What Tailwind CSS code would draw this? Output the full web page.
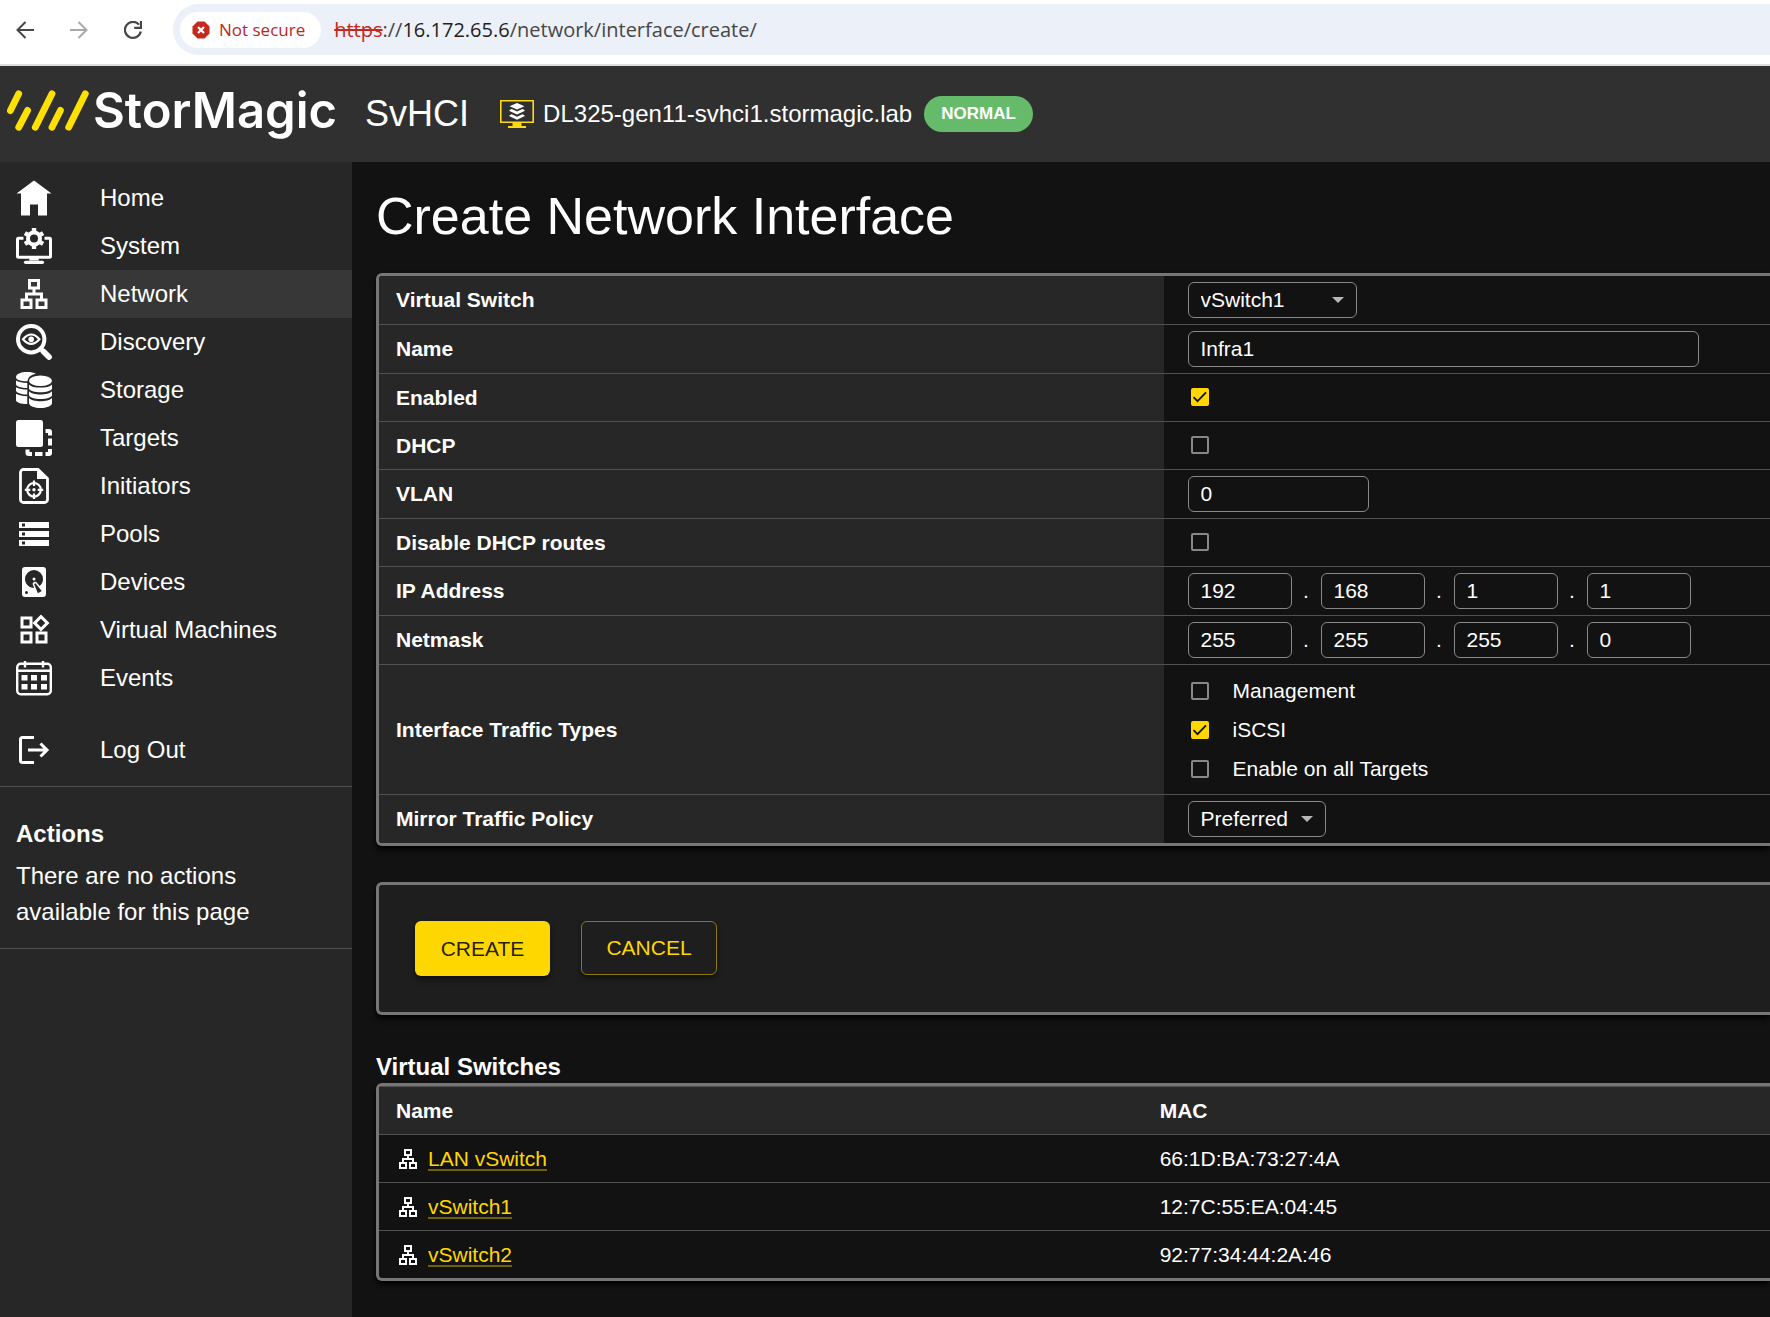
<!DOCTYPE html>
<html lang="en">
<head>
  <meta charset="UTF-8" />
  <meta name="viewport" content="width=device-width, initial-scale=1.0"/>
  <title>Create Network Interface - StorMagic SvHCI</title>
  <script src="https://cdn.jsdelivr.net/npm/@tailwindcss/browser@4"></script>
</head>
<body class="min-h-screen flex flex-col bg-[#121212] text-white font-['Liberation_Sans',Arial,sans-serif] overflow-x-hidden">

  <!-- shared icons -->
  <svg class="hidden">
    <symbol id="lan" viewBox="0 0 24 24"><path d="M13 22h8v-7h-3v-4h-5V9h3V2H8v7h3v2H6v4H3v7h8v-7H8v-2h8v2h-3v7zM10 7V4h4v3h-4zM9 17v3H5v-3h4zm10 0v3h-4v-3h4z"/></symbol>
    <symbol id="check" viewBox="0 0 18 18"><path d="M2.500 9.200l4 4 8.500-8.800" fill="none" stroke="#121212" stroke-width="1.800"/></symbol>
    <symbol id="caret" viewBox="0 0 12 6"><path d="M0 0h12L6 6z"/></symbol>
  </svg>

  <!-- Browser bar -->
  <div class="flex items-center h-[66px] bg-white border-b-2 border-[#dcdedc] pb-[5px] text-[#474747]">
    <button type="button" aria-label="Back" class="ml-4">
      <svg class="w-[18px] h-[18px]" viewBox="0 0 18 18" fill="none" stroke="currentColor" stroke-width="2"><path d="M18 9H1.500M9.500 1L1.500 9l8 8"/></svg>
    </button>
    <button type="button" aria-label="Forward" class="ml-9 text-[#a9a9a9]">
      <svg class="w-[18px] h-[18px]" viewBox="0 0 18 18" fill="none" stroke="currentColor" stroke-width="2"><path d="M0 9h16.500M8.500 1l8 8-8 8"/></svg>
    </button>
    <button type="button" aria-label="Reload" class="ml-9">
      <svg class="w-[18px] h-[18px]" viewBox="0 0 18 18" fill="none" stroke="currentColor" stroke-width="2.200"><path d="M16.800 10.500A8 8 0 1 1 15 3.600M17 0v6.800h-6.800"/></svg>
    </button>
    <div class="ml-[31px] flex-1 flex items-center h-[51px] pl-[7px] bg-[#ecf0f9] rounded-l-full font-['Open_Sans','Noto_Sans',sans-serif]">
      <div class="flex items-center gap-[9px] h-9 pl-3 pr-4 bg-white rounded-full text-[#b9271f] text-[17px]">
        <svg class="w-[18px] h-[18px]" viewBox="0 0 18 18"><path d="M5.500.5h7l5 5v7l-5 5h-7l-5-5v-7z" fill="#c5281c"/><path d="M6 6l6 6M12 6l-6 6" stroke="#fff" stroke-width="2.200"/></svg>
        <span>Not secure</span>
      </div>
      <span class="ml-[13px] text-[20px] text-[#474747]"><span class="text-[#c5281c] line-through">https</span>://<span class="text-[#1f1f1f]">16.172.65.6</span>/network/interface/create/</span>
    </div>
  </div>

  <header class="flex items-center h-24 bg-[#303030] pl-[7px]">
    <div class="flex items-center pb-2">
      <svg class="w-[82px] h-[41px] shrink-0" viewBox="0 0 82 41" stroke="#ffe100" stroke-width="6.800" stroke-linecap="round"><path d="M11.700 3.700L3.400 20.600M20.600 20.400L11.700 37.300M45 3.700L28.300 37.300M53.400 20.400L45 37.300M78.300 3.700L61.700 37.300"/></svg>
      <span class="ml-1 text-[49px] leading-none font-semibold font-['Inter',sans-serif]">StorMagic</span>
    </div>
    <span class="ml-7 text-[36px] leading-none">SvHCI</span>
    <svg class="ml-[31px] w-[34px] h-[28px]" viewBox="0 0 34 28"><path d="M.8.8h32.400v21.400H.8z" fill="none" stroke="#fdda16" stroke-width="1.600"/><path d="M12.500 22.500h9v3.500h4.500v2H8v-2h4.500z" fill="#fdda16"/><path d="M17 3l7.500 3.300L17 9.600 9.500 6.300zM9.500 10l2.200-1L17 11.600 22.300 9l2.200 1v1L17 14.500 9.500 11zM9.500 15.200l2.200-1L17 16.800l5.300-2.600 2.200 1v1L17 19.700l-7.500-3.500z" fill="#fff"/></svg>
    <span class="ml-[9px] text-2xl leading-none">DL325-gen11-svhci1.stormagic.lab</span>
    <span class="ml-3 flex items-center h-9 px-[17px] rounded-full bg-[#66bb6a] text-[17px] font-bold">NORMAL</span>
  </header>

  <div class="flex flex-1">
    <aside class="w-[352px] shrink-0 bg-[#272727] text-2xl">
      <nav class="py-3 border-b border-[#505050]">
        <a href="#" class="flex items-center gap-12 h-12 px-4">
          <svg class="w-9 h-9" viewBox="0 0 36 36" fill="currentColor"><path d="M18 .5L35.500 13.500H31V35.500h-9V24.500h-8v11H5v-22H.5z"/></svg>
          Home
        </a>
        <a href="#" class="flex items-center gap-12 h-12 px-4">
          <svg class="w-9 h-9" viewBox="0 0 36 36" fill="none" stroke="currentColor"><path d="M7.500 10.200H2.500a1 1 0 0 0-1 1v17a1 1 0 0 0 1 1h31a1 1 0 0 0 1-1v-17a1 1 0 0 0-1-1h-5" stroke-width="3"/><path d="M14 29h8l1 3.500H13z" fill="currentColor" stroke="none"/><path d="M9.500 34.300h17" stroke-width="3.200" stroke-linecap="round"/><circle cx="18" cy="10.500" r="6" stroke-width="4"/><path d="M18 0v4M18 17v4M8.900 5.200l3.500 2M23.600 13.800l3.500 2M8.900 15.800l3.500-2M23.600 7.200l3.500-2" stroke-width="4.400"/></svg>
          System
        </a>
        <a href="#" class="flex items-center gap-12 h-12 px-4 bg-[#373737]">
          <svg class="w-9 h-9 fill-current"><use href="#lan"/></svg>
          Network
        </a>
        <a href="#" class="flex items-center gap-12 h-12 px-4">
          <svg class="w-9 h-9" viewBox="0 0 36 36" fill="none" stroke="currentColor"><circle cx="15.200" cy="15.200" r="13.200" stroke-width="4"/><path d="M25 25l2 2" stroke-width="4"/><path d="M27.500 27.500l5.500 5.500" stroke-width="5.800" stroke-linecap="round"/><path d="M7 15.200Q15.200 5.800 23.400 15.200Q15.200 24.600 7 15.200z" stroke-width="2.200"/><circle cx="15.200" cy="15.200" r="2.800" fill="currentColor" stroke="none"/></svg>
          Discovery
        </a>
        <a href="#" class="flex items-center gap-12 h-12 px-4">
          <svg class="w-9 h-9" viewBox="0 0 36 36" fill="currentColor"><path d="M0 5c0-3 5-5 11-5 4 0 7 .6 9 1.800C15 3 12 5 11.500 9.300 5 9.300 0 8 0 5zM0 8.600c2.500 1.700 7 2.300 11.300 2.400v5C5 15.900 0 14.500 0 12zM0 15.200c2.500 1.700 7 2.300 11.300 2.400v5C5 22.500 0 21 0 18.600zM0 21.800c2.500 1.700 7 2.300 11.300 2.400v7.900C5 32 0 30.500 0 28z"/><ellipse cx="24.500" cy="8.700" rx="11.500" ry="5.300"/><path d="M13 12.400c2 2.200 6.500 3.200 11.500 3.200S34 14.600 36 12.400v4.300c-1 2.200-5.500 3.600-11.500 3.600s-10.500-1.400-11.500-3.600zM13 19.200c2 2.200 6.500 3.200 11.500 3.200S34 21.400 36 19.200v4.300c-1 2.200-5.500 3.600-11.500 3.600s-10.500-1.400-11.500-3.600zM13 26c2 2.200 6.500 3.200 11.500 3.200S34 28.200 36 26v5.500c-1 2.800-5.500 4.500-11.500 4.500S14 34.300 13 31.500z"/></svg>
          Storage
        </a>
        <a href="#" class="flex items-center gap-12 h-12 px-4">
          <svg class="w-9 h-9" viewBox="0 0 36 36" fill="currentColor"><rect width="27" height="27" rx="2.500"/><path d="M29.500 9H33a3 3 0 0 1 3 3v3.500h-4V13h-2.500zM32 18.500h4v7h-4zM32 29h4v4a3 3 0 0 1-3 3h-3.500v-4H32zM19 32h7.500v4H19zM9.500 29.500h4V32H16v4h-3.500a3 3 0 0 1-3-3z"/></svg>
          Targets
        </a>
        <a href="#" class="flex items-center gap-12 h-12 px-4">
          <svg class="w-9 h-9" viewBox="0 0 36 36" fill="none" stroke="currentColor"><path d="M22 1.500H7.500a3 3 0 0 0-3 3v27a3 3 0 0 0 3 3h21a3 3 0 0 0 3-3V10.500z" stroke-width="2.800"/><path d="M21 1l11 10H21z" fill="currentColor" stroke="none"/><circle cx="18" cy="21.800" r="6.800" stroke-width="2.200"/><path d="M18 12.500v5.500M18 25.500v5.500M8.800 21.800h5.500M21.700 21.800h5.500" stroke-width="2.200"/><circle cx="18" cy="21.800" r="1.700" fill="currentColor" stroke="none"/></svg>
          Initiators
        </a>
        <a href="#" class="flex items-center gap-12 h-12 px-4">
          <svg class="w-9 h-9" viewBox="0 0 24 24" fill="currentColor"><path d="M2 20h20v-4H2v4zm2-3h2v2H4v-2zM2 4v4h20V4H2zm4 3H4V5h2v2zm-4 7h20v-4H2v4zm2-3h2v2H4v-2z"/></svg>
          Pools
        </a>
        <a href="#" class="flex items-center gap-12 h-12 px-4">
          <svg class="w-9 h-9" viewBox="0 0 24 24" fill="currentColor"><path d="M6 2h12a2 2 0 0 1 2 2v16a2 2 0 0 1-2 2H6a2 2 0 0 1-2-2V4a2 2 0 0 1 2-2m6 2a6 6 0 0 0-6 6c0 3.310 2.690 6 6.100 6l-.88-2.230c-.27-.48-.11-1.090.37-1.370l.86-.5c.48-.27 1.090-.11 1.370.37l1.920 2.420A5.980 5.980 0 0 0 18 10a6 6 0 0 0-6-6m0 5a1 1 0 0 1 1 1 1 1 0 0 1-1 1 1 1 0 0 1-1-1 1 1 0 0 1 1-1m-5 9a1 1 0 0 0-1 1 1 1 0 0 0 1 1 1 1 0 0 0 1-1 1 1 0 0 0-1-1m5.090-4.730l2.490 6.310 2.590-1.500-4.220-5.310-.86.5z"/></svg>
          Devices
        </a>
        <a href="#" class="flex items-center gap-12 h-12 px-4">
          <svg class="w-9 h-9" viewBox="0 0 24 24" fill="currentColor"><path d="M16.660 4.520l2.830 2.830-2.830 2.830-2.830-2.830 2.830-2.830M9 5v4H5V5h4m10 10v4h-4v-4h4M9 15v4H5v-4h4m7.660-13.310L11 7.340 16.660 13l5.660-5.660-5.660-5.650zM11 3H3v8h8V3zm10 10h-8v8h8v-8zm-10 0H3v8h8v-8z"/></svg>
          Virtual Machines
        </a>
        <a href="#" class="flex items-center gap-12 h-12 px-4">
          <svg class="w-9 h-9" viewBox="0 0 36 36" fill="none" stroke="currentColor" stroke-width="2.400"><rect x="1.200" y="3.700" width="33.600" height="30.600" rx="3.500"/><path d="M1 10.800h34M9 1v6.500M27 1v6.500"/><path d="M5.500 15h6v5.500h-6zM15 15h6v5.500h-6zM25 15h6v5.500h-6zM5.500 24h6v5.500h-6zM15 24h6v5.500h-6zM25 24h6v5.500h-6z" fill="currentColor" stroke="none"/></svg>
          Events
        </a>
        <a href="#" class="mt-6 flex items-center gap-12 h-12 px-4">
          <svg class="w-9 h-9" viewBox="0 0 36 36" fill="none" stroke="currentColor" stroke-width="3"><path d="M18 5.500H6.500a2 2 0 0 0-2 2v21a2 2 0 0 0 2 2H18M12 18h19M24.500 11.500l6.500 6.500-6.500 6.500"/></svg>
          Log Out
        </a>
      </nav>
      <section class="px-4 pt-[29px] pb-[18px] border-b border-[#505050]">
        <h2 class="font-bold leading-9">Actions</h2>
        <p class="mt-[6px] leading-9">There are no actions<br>available for this page</p>
      </section>
    </aside>

    <main class="flex-1 min-w-0 pl-6 text-[21px] leading-6">
      <h1 class="mt-6 text-[52px] leading-[60px]">Create Network Interface</h1>

      <form>
        <div class="mt-[27px] border-3 border-r-0 border-[#767676] rounded-l-md overflow-hidden shadow-md shadow-black">
          <table class="w-full border-separate border-spacing-0">
            <tbody>
              <tr>
                <th scope="row" class="w-[56.4%] h-[49px] px-[17px] text-left bg-[#272727] border-b border-[#515151]"><label for="vswitch">Virtual Switch</label></th>
                <td class="px-6 border-b border-[#515151]">
                  <div class="relative w-[169px]">
                    <select id="vswitch" class="block w-full h-9 px-3 appearance-none border border-[#888] rounded-md bg-[#121212]">
                      <option>vSwitch1</option>
                      <option>vSwitch2</option>
                      <option>LAN vSwitch</option>
                    </select>
                    <svg class="absolute right-[13px] top-[15px] w-3 h-[6px] fill-[#b8b8b8] pointer-events-none"><use href="#caret"/></svg>
                  </div>
                </td>
              </tr>
              <tr>
                <th scope="row" class="h-[49px] px-[17px] text-left bg-[#272727] border-b border-[#515151]"><label for="name">Name</label></th>
                <td class="px-6 border-b border-[#515151]"><input id="name" type="text" value="Infra1" class="block w-[511px] h-9 px-3 border border-[#888] rounded-md"></td>
              </tr>
              <tr>
                <th scope="row" class="h-12 px-[17px] text-left bg-[#272727] border-b border-[#515151]"><label for="enabled">Enabled</label></th>
                <td class="px-[27px] pb-0.5 border-b border-[#515151]">
                  <div class="relative w-[18px] h-[18px]">
                    <input id="enabled" type="checkbox" checked class="peer block w-[18px] h-[18px] appearance-none rounded-xs border-2 border-[#888] checked:border-[#ffd700] checked:bg-[#ffd700]">
                    <svg class="absolute inset-0 w-[18px] h-[18px] hidden peer-checked:block pointer-events-none"><use href="#check"/></svg>
                  </div>
                </td>
              </tr>
              <tr>
                <th scope="row" class="h-12 px-[17px] text-left bg-[#272727] border-b border-[#515151]"><label for="dhcp">DHCP</label></th>
                <td class="px-[27px] pb-0.5 border-b border-[#515151]">
                  <div class="relative w-[18px] h-[18px]">
                    <input id="dhcp" type="checkbox" class="peer block w-[18px] h-[18px] appearance-none rounded-xs border-2 border-[#888] checked:border-[#ffd700] checked:bg-[#ffd700]">
                    <svg class="absolute inset-0 w-[18px] h-[18px] hidden peer-checked:block pointer-events-none"><use href="#check"/></svg>
                  </div>
                </td>
              </tr>
              <tr>
                <th scope="row" class="h-[49px] px-[17px] text-left bg-[#272727] border-b border-[#515151]"><label for="vlan">VLAN</label></th>
                <td class="px-6 border-b border-[#515151]"><input id="vlan" type="text" value="0" class="block w-[181px] h-9 px-3 border border-[#888] rounded-md"></td>
              </tr>
              <tr>
                <th scope="row" class="h-12 px-[17px] text-left bg-[#272727] border-b border-[#515151]"><label for="noroutes">Disable DHCP routes</label></th>
                <td class="px-[27px] pb-0.5 border-b border-[#515151]">
                  <div class="relative w-[18px] h-[18px]">
                    <input id="noroutes" type="checkbox" class="peer block w-[18px] h-[18px] appearance-none rounded-xs border-2 border-[#888] checked:border-[#ffd700] checked:bg-[#ffd700]">
                    <svg class="absolute inset-0 w-[18px] h-[18px] hidden peer-checked:block pointer-events-none"><use href="#check"/></svg>
                  </div>
                </td>
              </tr>
              <tr>
                <th scope="row" class="h-[49px] px-[17px] text-left bg-[#272727] border-b border-[#515151]"><label for="ip1">IP Address</label></th>
                <td class="px-6 border-b border-[#515151]">
                  <div class="flex items-center">
                    <input id="ip1" type="text" value="192" class="w-[104px] h-9 px-3 border border-[#888] rounded-md">
                    <span class="w-[29px] text-center">.</span>
                    <input type="text" aria-label="IP address part 2" value="168" class="w-[104px] h-9 px-3 border border-[#888] rounded-md">
                    <span class="w-[29px] text-center">.</span>
                    <input type="text" aria-label="IP address part 3" value="1" class="w-[104px] h-9 px-3 border border-[#888] rounded-md">
                    <span class="w-[29px] text-center">.</span>
                    <input type="text" aria-label="IP address part 4" value="1" class="w-[104px] h-9 px-3 border border-[#888] rounded-md">
                  </div>
                </td>
              </tr>
              <tr>
                <th scope="row" class="h-[49px] px-[17px] text-left bg-[#272727] border-b border-[#515151]"><label for="mask1">Netmask</label></th>
                <td class="px-6 border-b border-[#515151]">
                  <div class="flex items-center">
                    <input id="mask1" type="text" value="255" class="w-[104px] h-9 px-3 border border-[#888] rounded-md">
                    <span class="w-[29px] text-center">.</span>
                    <input type="text" aria-label="Netmask part 2" value="255" class="w-[104px] h-9 px-3 border border-[#888] rounded-md">
                    <span class="w-[29px] text-center">.</span>
                    <input type="text" aria-label="Netmask part 3" value="255" class="w-[104px] h-9 px-3 border border-[#888] rounded-md">
                    <span class="w-[29px] text-center">.</span>
                    <input type="text" aria-label="Netmask part 4" value="0" class="w-[104px] h-9 px-3 border border-[#888] rounded-md">
                  </div>
                </td>
              </tr>
              <tr>
                <th scope="row" class="h-[130px] px-[17px] text-left bg-[#272727] border-b border-[#515151]">Interface Traffic Types</th>
                <td class="px-[27px] border-b border-[#515151]">
                  <label class="flex items-center gap-6 h-[39px]">
                    <span class="relative w-[18px] h-[18px]">
                      <input type="checkbox" class="peer block w-[18px] h-[18px] appearance-none rounded-xs border-2 border-[#888] checked:border-[#ffd700] checked:bg-[#ffd700]">
                      <svg class="absolute inset-0 w-[18px] h-[18px] hidden peer-checked:block pointer-events-none"><use href="#check"/></svg>
                    </span>
                    Management
                  </label>
                  <label class="flex items-center gap-6 h-[39px]">
                    <span class="relative w-[18px] h-[18px]">
                      <input type="checkbox" checked class="peer block w-[18px] h-[18px] appearance-none rounded-xs border-2 border-[#888] checked:border-[#ffd700] checked:bg-[#ffd700]">
                      <svg class="absolute inset-0 w-[18px] h-[18px] hidden peer-checked:block pointer-events-none"><use href="#check"/></svg>
                    </span>
                    iSCSI
                  </label>
                  <label class="flex items-center gap-6 h-[39px]">
                    <span class="relative w-[18px] h-[18px]">
                      <input type="checkbox" class="peer block w-[18px] h-[18px] appearance-none rounded-xs border-2 border-[#888] checked:border-[#ffd700] checked:bg-[#ffd700]">
                      <svg class="absolute inset-0 w-[18px] h-[18px] hidden peer-checked:block pointer-events-none"><use href="#check"/></svg>
                    </span>
                    Enable on all Targets
                  </label>
                </td>
              </tr>
              <tr>
                <th scope="row" class="h-12 px-[17px] text-left bg-[#272727]"><label for="mirror">Mirror Traffic Policy</label></th>
                <td class="px-6">
                  <div class="relative w-[138px]">
                    <select id="mirror" class="block w-full h-9 px-3 appearance-none border border-[#888] rounded-md bg-[#121212]">
                      <option>Preferred</option>
                    </select>
                    <svg class="absolute right-[13px] top-[15px] w-3 h-[6px] fill-[#b8b8b8] pointer-events-none"><use href="#caret"/></svg>
                  </div>
                </td>
              </tr>
            </tbody>
          </table>
        </div>

        <div class="mt-9 p-9 flex items-start gap-[31px] bg-[#1e1e1e] border-3 border-r-0 border-[#767676] rounded-l-md shadow-md shadow-black">
          <button type="submit" class="h-[55px] px-6 min-w-[135px] rounded-md bg-[#ffd700] text-black/87 shadow-md shadow-black/50">CREATE</button>
          <button type="button" class="h-[54px] px-6 min-w-[136px] rounded-md border border-[#8e790f] text-[#ffd700] shadow-md shadow-black/40">CANCEL</button>
        </div>
      </form>

      <h2 class="mt-9 text-2xl leading-8 font-bold">Virtual Switches</h2>
      <div class="border-3 border-r-0 border-[#767676] rounded-l-md overflow-hidden shadow-md shadow-black">
        <table class="w-full border-separate border-spacing-0 text-left">
          <thead class="bg-[#272727]">
            <tr>
              <th class="w-[54.9%] h-[49px] px-[17px] border-y border-[#515151]">Name</th>
              <th class="px-[17px] border-y border-[#515151]">MAC</th>
            </tr>
          </thead>
          <tbody>
            <tr>
              <td class="h-12 px-[17px] border-b border-[#515151]">
                <div class="flex items-center gap-2"><svg class="w-6 h-6 fill-white"><use href="#lan"/></svg><a href="#" class="pt-0.5 text-[#ffd700] border-b-2 border-[#71600b] leading-5">LAN vSwitch</a></div>
              </td>
              <td class="px-[17px] border-b border-[#515151]">66:1D:BA:73:27:4A</td>
            </tr>
            <tr>
              <td class="h-12 px-[17px] border-b border-[#515151]">
                <div class="flex items-center gap-2"><svg class="w-6 h-6 fill-white"><use href="#lan"/></svg><a href="#" class="pt-0.5 text-[#ffd700] border-b-2 border-[#71600b] leading-5">vSwitch1</a></div>
              </td>
              <td class="px-[17px] border-b border-[#515151]">12:7C:55:EA:04:45</td>
            </tr>
            <tr>
              <td class="h-[47px] px-[17px]">
                <div class="flex items-center gap-2"><svg class="w-6 h-6 fill-white"><use href="#lan"/></svg><a href="#" class="pt-0.5 text-[#ffd700] border-b-2 border-[#71600b] leading-5">vSwitch2</a></div>
              </td>
              <td class="px-[17px]">92:77:34:44:2A:46</td>
            </tr>
          </tbody>
        </table>
      </div>
    </main>
  </div>
</body>
</html>
